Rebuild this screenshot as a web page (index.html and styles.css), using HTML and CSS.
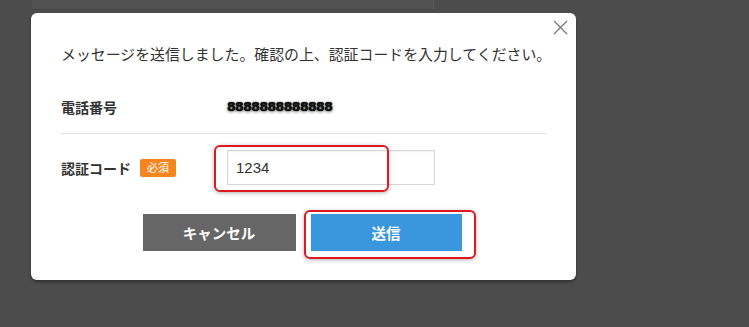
FILE: index.html
```html
<!DOCTYPE html>
<html lang="ja">
<head>
<meta charset="utf-8">
<link rel="stylesheet" href="styles.css">
</head>
<body>
<div class="backpage"></div>
<div class="modal">
  <button class="close" aria-label="閉じる">
    <svg width="15" height="15" viewBox="0 0 15 15"><path d="M1 1L14 14M14 1L1 14" stroke="#7a7a7a" stroke-width="1.3" fill="none"/></svg>
  </button>
  <p class="message">メッセージを送信しました。確認の上、認証コードを入力してください。</p>
  <div class="row row-first">
    <div class="label">電話番号</div>
    <div class="value"><span class="phone">8888888888888</span></div>
  </div>
  <div class="row">
    <div class="label">認証コード<span class="badge">必須</span></div>
    <div class="value">
      <div class="field">
        <input class="input" type="text" value="1234">
        <span class="mark mark-input"></span>
      </div>
    </div>
  </div>
  <div class="actions">
    <button class="btn btn-cancel">キャンセル</button>
    <div class="send-wrap">
      <button class="btn btn-send">送信</button>
      <span class="mark mark-send"></span>
    </div>
  </div>
</div>
</body>
</html>
```
FILE: styles.css
```css
html, body {
  margin: 0;
  padding: 0;
}
body {
  background: #4c4c4c;
  width: 749px;
  height: 327px;
  overflow: hidden;
  font-family: "Noto Sans CJK JP", "Noto Sans", sans-serif;
  color: #333;
}
.backpage {
  margin-left: 32px;
  width: 401px;
  height: 9px;
  background: #515151;
  border-right: 1px solid #5c5c5c;
  border-bottom: 1px solid #444;
}
.modal {
  position: relative;
  margin-top: 3px;
  margin-left: 31px;
  width: 545px;
  height: 267px;
  box-sizing: border-box;
  padding: 29px 30px 0 30px;
  background: #fff;
  border-radius: 6px;
  box-shadow: 0 2px 3px rgba(0, 0, 0, 0.35);
}
.close {
  position: absolute;
  top: 7px;
  right: 8px;
  width: 15px;
  height: 15px;
  padding: 0;
  border: 0;
  background: none;
  display: flex;
}
.message {
  margin: 0 0 15px 0;
  font-size: 14.9px;
  line-height: 24px;
  color: #333;
  white-space: nowrap;
}
.row {
  display: flex;
  align-items: center;
  padding: 16px 0;
}
.row-first {
  padding: 15px 0;
  border-bottom: 1px solid #e0e0e0;
}
.label {
  width: 166px;
  flex: none;
  display: flex;
  align-items: center;
  font-size: 14px;
  font-weight: 700;
  line-height: 22px;
  color: #333;
}
.badge {
  margin-left: 9px;
  width: 36px;
  height: 18px;
  display: inline-flex;
  align-items: center;
  justify-content: center;
  background: #f5861f;
  color: #fff;
  font-size: 11px;
  font-weight: 400;
  border-radius: 2px;
  line-height: 1;
}
.value {
  flex: 1;
  display: flex;
  align-items: center;
}
.phone {
  font-family: "DejaVu Sans", sans-serif;
  font-weight: 700;
  font-size: 12.5px;
  letter-spacing: -0.6px;
  color: #111;
  line-height: 22px;
  text-shadow: 0 0 1px #000, 0 1px 3px rgba(0,0,0,0.6);
}
.field {
  position: relative;
  display: flex;
}
.input {
  width: 208px;
  height: 35px;
  box-sizing: border-box;
  border: 1px solid #d6d6d6;
  padding: 0 0 0 8px;
  font-family: "Liberation Sans", "Noto Sans", sans-serif;
  font-size: 15px;
  color: #333;
  outline: none;
  box-shadow: inset 0 1px 2px rgba(0,0,0,0.06);
}
.mark {
  position: absolute;
  box-sizing: border-box;
  border: 2px solid #dc1a22;
  border-radius: 6px;
  box-shadow: 0 1px 4px rgba(0, 0, 0, 0.3);
  pointer-events: none;
}
.mark-input {
  left: -13px;
  top: -5px;
  width: 175px;
  height: 47px;
}
.actions {
  margin-top: 13px;
  display: flex;
  justify-content: center;
  gap: 15px;
  padding-right: 3px;
}
.send-wrap {
  position: relative;
  display: flex;
}
.btn {
  height: 37px;
  border: 0;
  padding: 0;
  color: #fff;
  font-family: "Noto Sans CJK JP", "Noto Sans", sans-serif;
  font-size: 14.5px;
  font-weight: 700;
}
.btn-cancel {
  width: 153px;
  background: #666;
}
.btn-send {
  width: 151px;
  background: #3a97dd;
}
.mark-send {
  left: -7px;
  top: -4px;
  width: 172px;
  height: 49px;
}
```
